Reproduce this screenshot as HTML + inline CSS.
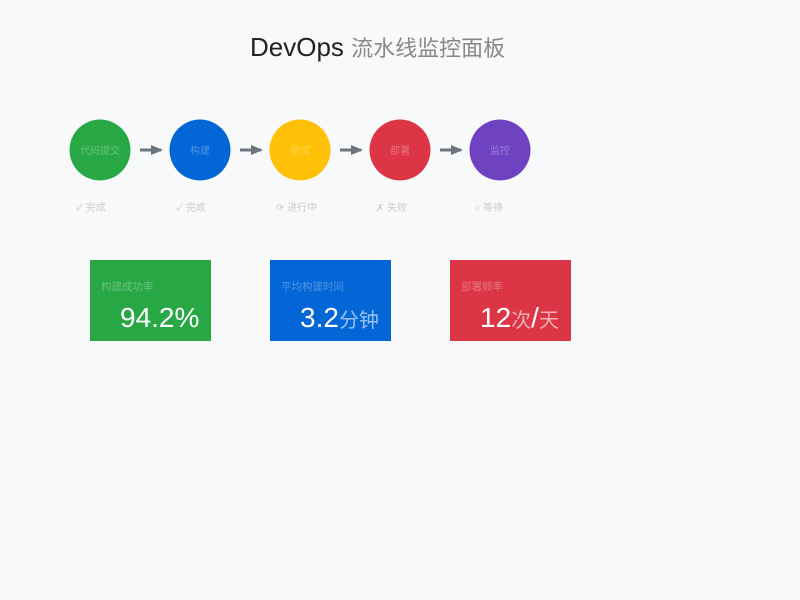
<!DOCTYPE html>
<html><head><meta charset="utf-8"><style>
html,body{margin:0;padding:0;background:#f8f9fa;width:800px;height:600px;overflow:hidden}
svg{display:block}
text{font-family:"Liberation Sans","Noto Sans CJK SC",sans-serif}
</style></head><body>
<svg width="800" height="600" viewBox="0 0 800 600">
<rect width="800" height="600" fill="#f8f9fa"/>
<text x="250" y="56" font-size="26" fill="#222">DevOps <tspan font-size="22" fill="#888">流水线监控面板</tspan></text>
<defs><marker id="a" markerUnits="userSpaceOnUse" markerWidth="12" markerHeight="10" refX="10" refY="5" orient="auto"><path d="M0,0 L12,5 L0,10 z" fill="#6c757d"/></marker></defs>
<g>
<circle cx="100" cy="150" r="30.5" fill="#28a745"/>
<circle cx="200" cy="150" r="30.5" fill="#0366d6"/>
<circle cx="300" cy="150" r="30.5" fill="#ffc107"/>
<circle cx="400" cy="150" r="30.5" fill="#dc3545"/>
<circle cx="500" cy="150" r="30.5" fill="#6f42c1"/>
</g>
<g font-size="10" fill="#fff" fill-opacity="0.3" text-anchor="middle">
<text x="100" y="154">代码提交</text><text x="200" y="154">构建</text><text x="300" y="154">测试</text><text x="400" y="154">部署</text><text x="500" y="154">监控</text>
</g>
<g stroke="#6c757d" stroke-width="3">
<line x1="140" y1="150" x2="161" y2="150" marker-end="url(#a)"/>
<line x1="240" y1="150" x2="261" y2="150" marker-end="url(#a)"/>
<line x1="340" y1="150" x2="361" y2="150" marker-end="url(#a)"/>
<line x1="440" y1="150" x2="461" y2="150" marker-end="url(#a)"/>
</g>
<g font-size="10" fill="#ccc">
<text x="76" y="211">✓ 完成</text><text x="176" y="211">✓ 完成</text><text x="276" y="211">⟳ 进行中</text><text x="376" y="211">✗ 失败</text><text x="474" y="211">○ 等待</text>
</g>
<rect x="90" y="260" width="121" height="81" fill="#28a745"/>
<rect x="270" y="260" width="121" height="81" fill="#0366d6"/>
<rect x="450" y="260" width="121" height="81" fill="#dc3545"/>
<g font-size="10.5" fill="#fff" fill-opacity="0.3">
<text x="101" y="290">构建成功率</text><text x="281" y="290">平均构建时间</text><text x="461" y="290">部署频率</text>
</g>
<g font-size="28" fill="#fff">
<text x="120" y="327">94.2%</text><text x="300" y="327">3.2<tspan font-size="20" fill-opacity="0.6">分钟</tspan></text><text x="480" y="327">12<tspan font-size="20" fill-opacity="0.6">次</tspan>/<tspan font-size="20" fill-opacity="0.6">天</tspan></text>
</g>
</svg>
</body></html>
